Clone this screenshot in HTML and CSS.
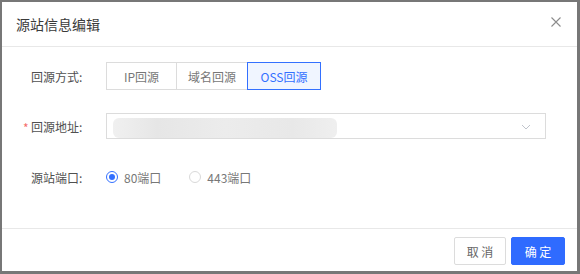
FILE: index.html
```html
<!DOCTYPE html>
<html lang="zh-CN">
<head>
    <meta charset="UTF-8">
    <title>源站信息编辑</title>
    <link rel="stylesheet" href="styles.css">
</head>
<body>
    <div class="dialog">
        <div class="dialog-header">
            <span class="dialog-title">源站信息编辑</span>
            <span class="dialog-close">
                <svg width="10" height="10" viewBox="0 0 10 10"><path d="M0.5 0.5L9.5 9.5M9.5 0.5L0.5 9.5" stroke="#8c8c8c" stroke-width="1.1" fill="none"/></svg>
            </span>
        </div>
        <div class="dialog-body">
            <div class="form-row row-type">
                <label class="form-label">回源方式:</label>
                <div class="seg">
                    <button class="seg-btn">IP回源</button>
                    <button class="seg-btn">域名回源</button>
                    <button class="seg-btn active">OSS回源</button>
                </div>
            </div>
            <div class="form-row row-addr">
                <label class="form-label required">回源地址:</label>
                <div class="select">
                    <div class="select-value"></div>
                    <svg class="select-arrow" width="10" height="6" viewBox="0 0 10 6"><path d="M1 1L5 5L9 1" stroke="#c0c4cc" stroke-width="1" fill="none"/></svg>
                </div>
            </div>
            <div class="form-row row-port">
                <label class="form-label">源站端口:</label>
                <div class="radios">
                    <span class="radio checked"><i></i>80端口</span>
                    <span class="radio"><i></i>443端口</span>
                </div>
            </div>
        </div>
        <div class="dialog-footer">
            <button class="btn">取 消</button>
            <button class="btn primary">确 定</button>
        </div>
    </div>
</body>
</html>
```

FILE: styles.css
```css
body {
    margin: 0;
    padding: 2px 3px 3px 2px;
    background-color: #777;
    font-family: "Noto Sans CJK SC", "Liberation Sans", sans-serif;
    color: #333;
}

.dialog {
    width: 575px;
    height: 269px;
    background: #fff;
    display: flex;
    flex-direction: column;
}

.dialog-header {
    height: 44px;
    display: flex;
    align-items: center;
    justify-content: space-between;
    padding: 0 16px 0 14px;
    border-bottom: 1px solid #e8e8e8;
}

.dialog-title {
    font-size: 14px;
    color: #3a3a3a;
}

.dialog-close {
    display: flex;
    margin-top: -4px;
}

.dialog-body {
    flex: 1;
    padding-left: 21px;
}

.form-row {
    display: flex;
    align-items: center;
}

.row-type {
    margin-top: 15px;
    height: 28px;
}

.row-addr {
    margin-top: 23px;
    height: 26px;
}

.row-port {
    margin-top: 26px;
    height: 24px;
}

.form-label {
    width: 83px;
    padding-left: 8px;
    box-sizing: border-box;
    font-size: 12px;
    color: #505050;
    position: relative;
}

.form-label.required::before {
    content: "*";
    color: #f56c6c;
    position: absolute;
    left: 0;
    top: 1px;
}

.seg {
    display: flex;
}

.seg-btn {
    width: 72px;
    height: 28px;
    border: 1px solid #dcdcdc;
    background: #fff;
    font-family: inherit;
    font-size: 12px;
    color: #777;
    padding: 0;
    margin-left: -1px;
}

.seg-btn:first-child {
    margin-left: 0;
    width: 71px;
}

.seg-btn.active {
    border-color: #3370ff;
    color: #3370ff;
    background: #f0f5ff;
    position: relative;
    width: 74px;
}

.select {
    width: 440px;
    height: 26px;
    border: 1px solid #dcdcdc;
    box-sizing: border-box;
    display: flex;
    align-items: center;
    justify-content: space-between;
    padding: 0 14px 0 6px;
}

.select-value {
    width: 224px;
    height: 20px;
    margin-top: 3px;
    border-radius: 6px;
    background: linear-gradient(to right, #f0f0f0, #e6e6e6 20%, #ececec 50%, #e8e8e8 80%, #efefef);
    filter: blur(0.6px);
}

.select-arrow {
    margin-top: 2px;
}

.radios {
    display: flex;
    gap: 28px;
}

.radio {
    display: flex;
    align-items: center;
    font-size: 12px;
    color: #777;
}

.radio i {
    width: 10px;
    height: 10px;
    border: 1px solid #d9d9d9;
    border-radius: 50%;
    margin-right: 6px;
    box-sizing: content-box;
    position: relative;
}

.radio.checked i {
    border-color: #3370ff;
}

.radio.checked i::after {
    content: "";
    position: absolute;
    left: 2px;
    top: 2px;
    width: 6px;
    height: 6px;
    border-radius: 50%;
    background: #3370ff;
}

.dialog-footer {
    border-top: 1px solid #e8e8e8;
    height: 43px;
    display: flex;
    justify-content: flex-end;
    align-items: flex-start;
    padding: 8px 12px 0 0;
    box-sizing: border-box;
    gap: 5px;
}

.btn {
    width: 52px;
    height: 28px;
    border: 1px solid #dcdcdc;
    background: #fff;
    font-family: inherit;
    font-size: 12px;
    color: #666;
    border-radius: 2px;
    padding: 0;
}

.btn.primary {
    width: 54px;
    background: #2f6bff;
    border-color: #2f6bff;
    color: #fff;
}
```
